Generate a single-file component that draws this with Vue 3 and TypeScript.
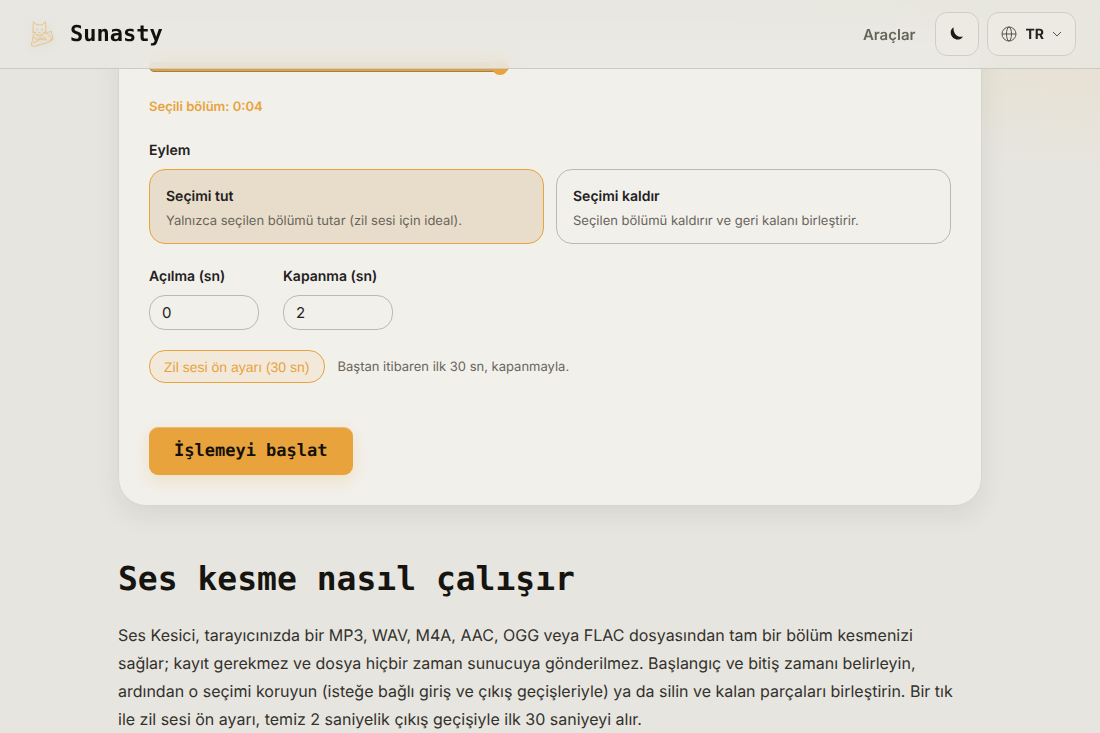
<script setup lang="ts">
import { ref, computed } from 'vue'

interface ActionOption {
  id: 'keep' | 'remove'
  title: string
  text: string
}

const actions: ActionOption[] = [
  { id: 'keep', title: 'Seçimi tut', text: 'Yalnızca seçilen bölümü tutar (zil sesi için ideal).' },
  { id: 'remove', title: 'Seçimi kaldır', text: 'Seçilen bölümü kaldırır ve geri kalanı birleştirir.' },
]

const action = ref<ActionOption['id']>('keep')
const end = ref(4)
const fadeIn = ref(0)
const fadeOut = ref(2)

const selected = computed(() => {
  const total = Number(end.value)
  return `${Math.floor(total / 60)}:${String(total % 60).padStart(2, '0')}`
})

function applyPreset(): void {
  fadeIn.value = 0
  fadeOut.value = 2
}
</script>

<template>
  <div class="page">
    <header class="topbar">
      <a class="brand" href="#">
        <svg class="cat" viewBox="0 0 36 36" aria-hidden="true">
          <path d="M9 14l0.500-8.500 3.500 3.500c1.500-.5 3.500-.5 5 0l3.500-3.500 0.500 8.500c0 3-3 5-6.500 5s-6.500-2-6.500-5z" />
          <path d="M12 13l2 1M19 13l-2 1M14.500 16l1 1 1-1M8 16l4 0.500M23 16l-4 0.500" />
          <path d="M10 18c-1.500 3-1 6-2 8l-1 3 3 1.500 12-3.500 6-2.500-1-3-4-4-2-0.500" />
          <path d="M22 17.500l5-2.500 2 8-4 1.500M9 27l8-4 6 1M9 21l5 2.500 8-2M13.500 19l2 2.500 3-2.500" />
        </svg>
        <span class="brand-name">Sunasty</span>
      </a>
      <nav class="nav">
        <a class="nav-link" href="#">Araçlar</a>
        <div class="tools">
          <button class="tool" type="button" aria-label="Koyu tema">
            <svg width="16" height="16" viewBox="0 0 16 16" aria-hidden="true">
              <path class="moon" d="M4.600 1.200C2.400 2.700 1.200 5 1.800 7.800C2.600 11.600 6 14 9.600 13.500C11.500 13.200 13.200 12 14 10.400C12.400 11 10.600 11 8.900 10.200C5.800 8.700 4.100 5 4.600 1.200Z" />
            </svg>
          </button>
          <button class="tool lang" type="button">
            <svg class="line" width="16" height="16" viewBox="0 0 16 16" aria-hidden="true">
              <circle cx="8" cy="8" r="7" />
              <ellipse cx="8" cy="8" rx="2.500" ry="7" />
              <path d="M1 8h14" />
            </svg>
            <span>TR</span>
            <svg class="line" width="10" height="10" viewBox="0 0 10 10" aria-hidden="true">
              <path d="M1 3l4 4 4-4" />
            </svg>
          </button>
        </div>
      </nav>
    </header>

    <main class="content">
      <section class="card">
        <input v-model="end" class="range" type="range" min="0" max="4" aria-label="Bitiş" />
        <p class="selected">Seçili bölüm: {{ selected }}</p>

        <h3 class="label">Eylem</h3>
        <div class="actions">
          <button
            v-for="item in actions"
            :key="item.id"
            type="button"
            class="action"
            :class="{ active: action === item.id }"
            :aria-pressed="action === item.id"
            @click="action = item.id"
          >
            <span class="action-title">{{ item.title }}</span>
            <span class="action-text">{{ item.text }}</span>
          </button>
        </div>

        <div class="fades">
          <div class="field">
            <label class="label" for="fade-in">Açılma (sn)</label>
            <input id="fade-in" v-model="fadeIn" class="number" type="number" min="0" />
          </div>
          <div class="field">
            <label class="label" for="fade-out">Kapanma (sn)</label>
            <input id="fade-out" v-model="fadeOut" class="number" type="number" min="0" />
          </div>
        </div>

        <div class="preset-row">
          <button class="preset" type="button" @click="applyPreset">Zil sesi ön ayarı (30 sn)</button>
          <span class="hint">Baştan itibaren ilk 30 sn, kapanmayla.</span>
        </div>

        <button class="start" type="button">İşlemeyi başlat</button>
      </section>

      <section class="about">
        <h2>Ses kesme nasıl çalışır</h2>
        <p>
          Ses Kesici, tarayıcınızda bir MP3, WAV, M4A, AAC, OGG veya FLAC dosyasından tam bir bölüm
          kesmenizi sağlar; kayıt gerekmez ve dosya hiçbir zaman sunucuya gönderilmez. Başlangıç ve
          bitiş zamanı belirleyin, ardından o seçimi koruyun (isteğe bağlı giriş ve çıkış
          geçişleriyle) ya da silin ve kalan parçaları birleştirin. Bir tık ile zil sesi ön ayarı,
          temiz 2 saniyelik çıkış geçişiyle ilk 30 saniyeyi alır.
        </p>
      </section>
    </main>
  </div>
</template>

<style>
body {
  margin: 0;
  background: #e6e5e0;
}
</style>

<style scoped>
* {
  box-sizing: border-box;
}

.page {
  min-height: 100vh;
  font-family: Inter, 'Liberation Sans', sans-serif;
  text-rendering: geometricPrecision;
  color: #22211d;
  background: radial-gradient(ellipse 400px 180px at 100% 0, #e7e2d5 45%, #e6e5e000), #e6e5e0;
}

button,
input {
  margin: 0;
  font-family: inherit;
  text-rendering: inherit;
  color: inherit;
}

button {
  cursor: pointer;
}

.topbar {
  position: fixed;
  inset: 0 0 auto;
  z-index: 2;
  display: flex;
  align-items: center;
  justify-content: space-between;
  padding: 12px 24px;
  border-bottom: 1px solid #cbcac4;
  background: rgba(232, 231, 225, 0.84);
  backdrop-filter: blur(12px);
}

.brand {
  display: flex;
  align-items: center;
  gap: 10px;
  color: #12110d;
  text-decoration: none;
}

.cat {
  width: 36px;
  height: 36px;
  fill: none;
  stroke: #edc28a;
  stroke-width: 1;
  stroke-linejoin: round;
  filter: drop-shadow(0 2px 4px rgba(80, 75, 60, 0.15));
}

.brand-name {
  font: 700 22px/33px 'DejaVu Sans Mono', monospace;
}

.nav {
  display: flex;
  align-items: center;
  gap: 20px;
}

.nav-link {
  font-size: 15px;
  font-weight: 600;
  color: #66645a;
  text-decoration: none;
}

.tools {
  display: flex;
  gap: 8px;
}

.tool {
  display: flex;
  align-items: center;
  justify-content: center;
  width: 44px;
  height: 44px;
  padding: 0;
  border: 1px solid #cfcdc5;
  border-radius: 12px;
  background: #edeae4;
}

.lang {
  gap: 8px;
  width: auto;
  padding: 0 13px;
  font-size: 14px;
  font-weight: 700;
}

.moon {
  fill: #1a1915;
}

.line {
  fill: none;
  stroke: #55534a;
  stroke-width: 1;
}

.content {
  max-width: 912px;
  margin: 0 auto;
  padding: 28px 24px 0;
}

.card {
  padding: 30px;
  border: 1px solid #d7d6cf;
  border-radius: 28px;
  background: #f2f0eb;
  box-shadow: 0 10px 24px rgba(70, 68, 50, 0.09);
}

.range {
  display: block;
  appearance: none;
  width: 360px;
  max-width: 100%;
  height: 16px;
  background: none;
}

.range::-webkit-slider-runnable-track {
  height: 10px;
  border: 1px solid #a9813f;
  border-radius: 5px;
  background: #dba04a;
}

.range::-webkit-slider-thumb {
  appearance: none;
  width: 16px;
  height: 16px;
  margin-top: -4px;
  border-radius: 50%;
  background: #e8a33d;
}

.selected {
  margin: 22px 0 24px;
  font-size: 13px;
  line-height: 20px;
  font-weight: 600;
  color: #e8a33d;
}

.label {
  display: block;
  margin: 0 0 8px;
  font-size: 14px;
  line-height: 20px;
  font-weight: 600;
}

.actions {
  display: grid;
  grid-template-columns: 1fr 1fr;
  gap: 12px;
}

.action {
  display: flex;
  flex-direction: column;
  gap: 3px;
  padding: 15px 16px 12px;
  border: 1px solid #bbb9b1;
  border-radius: 16px;
  background: none;
  text-align: left;
}

.action.active {
  border-color: #e8a33d;
  background: #e8ddca;
}

.action-title {
  font-size: 14px;
  line-height: 24px;
  font-weight: 600;
}

.action-text {
  font-size: 13px;
  line-height: 19px;
  color: #68655b;
}

.fades {
  display: flex;
  gap: 24px;
  margin-top: 23px;
}

.number {
  display: block;
  appearance: textfield;
  width: 110px;
  height: 35px;
  padding: 0 12px;
  border: 1px solid #bbb9b1;
  border-radius: 16px;
  background: none;
  font-size: 15px;
}

.preset-row {
  display: flex;
  align-items: center;
  gap: 13px;
  margin: 20px 0 44px;
}

.preset {
  height: 33px;
  padding: 0 14px;
  border: 1px solid #e8a33d;
  border-radius: 16px;
  background: #f3e9db;
  font: 14px 'Liberation Sans', Arial, sans-serif;
  color: #e8a33d;
}

.hint {
  font-size: 13px;
  line-height: 20px;
  color: #68655b;
}

.start {
  display: block;
  height: 48px;
  padding: 0 25px;
  border: 0;
  border-radius: 9px;
  background: #e8a33d;
  box-shadow: 0 6px 16px rgba(232, 163, 61, 0.2), inset 0 1px 0 rgba(255, 255, 255, 0.25);
  font: 700 17px/24px 'DejaVu Sans Mono', monospace;
  color: #15110a;
}

.about h2 {
  margin: 53px 0 22px;
  font: 700 33px/40px 'DejaVu Sans Mono', monospace;
  color: #15140f;
}

.about p {
  max-width: 844px;
  margin: 0;
  font-size: 16px;
  line-height: 28px;
  color: #33312b;
}
</style>
